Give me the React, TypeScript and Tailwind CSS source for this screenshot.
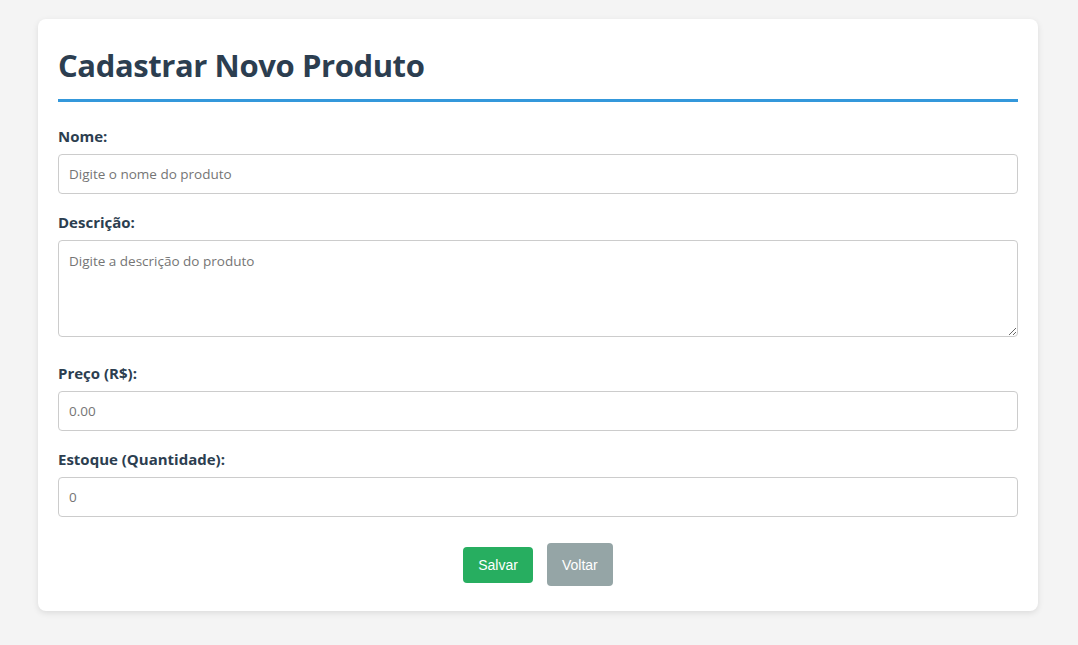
import React from "react";

const font = { fontFamily: '"Open Sans", "Noto Sans", sans-serif' };

function Field({ label, placeholder, mb = "mb-[18px]" }: { label: string; placeholder: string; mb?: string }) {
  return (
    <div className={mb}>
      <label className="block text-[15px] leading-[20px] font-bold text-[#2c3e50] mb-[8px]">{label}</label>
      <input
        type="text"
        placeholder={placeholder}
        className="block w-full h-[40px] px-[10px] border border-[#cccccc] rounded-[4px] text-[13.5px] text-[#333] placeholder:text-[#757575] outline-none bg-white"
      />
    </div>
  );
}

export default function App() {
  return (
    <div className="min-h-screen bg-[#f4f4f4] pt-[19px] pb-[20px]" style={font}>
      <div className="ml-[38px] w-[1000px] bg-white rounded-[8px] shadow-[0_2px_6px_rgba(0,0,0,0.1)] px-[20px] pt-[20px] pb-[25px]">
        <h1 className="mt-[6px] text-[31px] leading-[40px] tracking-[-0.4px] font-bold text-[#2c3e50] pb-[14px] border-b-[3px] border-[#3498db] mb-[24px]">
          Cadastrar Novo Produto
        </h1>
        <form onSubmit={(e) => e.preventDefault()}>
          <Field label="Nome:" placeholder="Digite o nome do produto" />
          <div className="mb-[26px]">
            <label className="block text-[15px] leading-[20px] font-bold text-[#2c3e50] mb-[8px]">Descrição:</label>
            <textarea
              placeholder="Digite a descrição do produto"
              className="block w-full h-[97px] px-[10px] py-[10px] border border-[#cccccc] rounded-[4px] text-[13.5px] leading-[20px] text-[#333] placeholder:text-[#757575] outline-none bg-white resize-y"
            />
          </div>
          <Field label="Preço (R$):" placeholder="0.00" />
          <Field label="Estoque (Quantidade):" placeholder="0" mb="mb-0" />
          <div className="mt-[26px] flex items-center justify-center gap-[14px]" style={{ fontFamily: '"Liberation Sans", Arial, sans-serif' }}>
            <button type="submit" className="h-[36px] px-[15px] rounded-[4px] bg-[#27ae60] text-white text-[14px] leading-[16px]">
              Salvar
            </button>
            <button type="button" className="h-[43px] px-[15px] rounded-[4px] bg-[#95a5a6] text-white text-[14px] leading-[16px]">
              Voltar
            </button>
          </div>
        </form>
      </div>
    </div>
  );
}
